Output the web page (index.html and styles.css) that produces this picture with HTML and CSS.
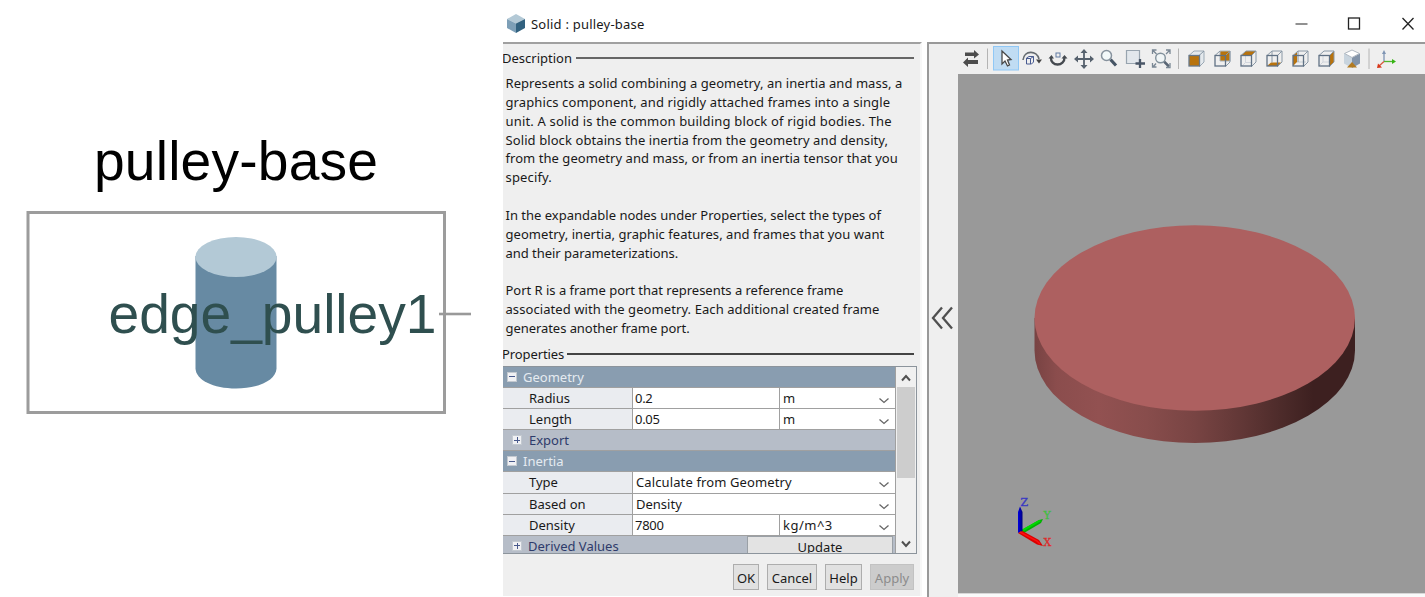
FILE: index.html
```
<!DOCTYPE html>
<html lang="en">
<head>
<meta charset="utf-8">
<title>Solid : pulley-base</title>
<link rel="stylesheet" href="styles.css">
</head>
<body>
<div class="page">
  <section class="diagram">
    <svg width="503" height="597" viewBox="0 0 503 597">
      <text x="94" y="180" font-size="55.200" textLength="284" fill="#000">pulley-base</text>
      <rect x="28" y="212.500" width="416.500" height="200" fill="#fff" stroke="#9c9c9c" stroke-width="3"/>
      <path d="M195.500 256V368.500C196 380 213 388.500 236 388.500S276 380 276.500 368.500V256Z" fill="#678aa3"/>
      <ellipse cx="236" cy="257" rx="40.500" ry="20" fill="#b3c9d6"/>
      <text x="108.500" y="332.500" font-size="55.200" textLength="328" fill="#2f4f4f">edge_pulley1</text>
      <path d="M439 314H471" stroke="#999" stroke-width="2.600"/>
    </svg>
  </section>
  <section class="dialog">
    <header class="titlebar">
      <svg class="cube" width="18" height="20" viewBox="0 0 18 20"><path d="M9 0L18 5L9 9.500L0 5Z" fill="#b3c9d6"/><path d="M0 5L9 9.500V19L0 14Z" fill="#7d9fb7"/><path d="M18 5L9 9.500V19L18 14Z" fill="#31617f"/></svg>
      <span class="title">Solid : pulley-base</span>
      <svg class="winbtns" width="130" height="42" viewBox="0 0 130 42" fill="none" stroke="#222" stroke-width="1.300"><path d="M0.500 24H12.500" stroke="#555"/><rect x="53.500" y="18" width="11" height="11"/><path d="M107.500 18L118.500 29.500M118.500 18L107.500 29.500"/></svg>
    </header>
    <div class="body">
      <div class="left">
        <div class="legend l1"><span class="d0">Description</span><i></i></div>
        <div class="desc">
          <span class="a1">Represents a solid combining a geometry, an inertia and mass, a</span>
          <span class="a2">graphics component, and rigidly attached frames into a single</span>
          <span class="a3">unit. A solid is the common building block of rigid bodies. The</span>
          <span class="a4">Solid block obtains the inertia from the geometry and density,</span>
          <span class="a5">from the geometry and mass, or from an inertia tensor that you</span>
          <span class="a6">specify.</span>
          <span class="gap"></span>
          <span class="a7">In the expandable nodes under Properties, select the types of</span>
          <span class="a8">geometry, inertia, graphic features, and frames that you want</span>
          <span class="a9">and their parameterizations.</span>
          <span class="gap"></span>
          <span class="a10">Port R is a frame port that represents a reference frame</span>
          <span class="a11">associated with the geometry. Each additional created frame</span>
          <span class="a12">generates another frame port.</span>
        </div>
        <div class="legend l2"><span>Properties</span><i></i></div>
        <div class="table">
          <div class="rows">
            <div class="row head"><b class="box minus"></b><span>Geometry</span></div>
            <div class="row"><div class="name">Radius</div><div class="val">0.2</div><div class="unit">m<svg class="chev" viewBox="0 0 10 6"><path d="M0.500 0.500L5 4.500L9.500 0.500"/></svg></div></div>
            <div class="row"><div class="name">Length</div><div class="val">0.05</div><div class="unit">m<svg class="chev" viewBox="0 0 10 6"><path d="M0.500 0.500L5 4.500L9.500 0.500"/></svg></div></div>
            <div class="row sub"><b class="box plus"></b><span>Export</span></div>
            <div class="row head"><b class="box minus"></b><span>Inertia</span></div>
            <div class="row"><div class="name">Type</div><div class="val wide calc">Calculate from Geometry<svg class="chev" viewBox="0 0 10 6"><path d="M0.500 0.500L5 4.500L9.500 0.500"/></svg></div></div>
            <div class="row"><div class="name">Based on</div><div class="val wide">Density<svg class="chev" viewBox="0 0 10 6"><path d="M0.500 0.500L5 4.500L9.500 0.500"/></svg></div></div>
            <div class="row"><div class="name">Density</div><div class="val">7800</div><div class="unit kg">kg/m^3<svg class="chev" viewBox="0 0 10 6"><path d="M0.500 0.500L5 4.500L9.500 0.500"/></svg></div></div>
            <div class="row sub"><b class="box plus"></b><span class="derived">Derived Values</span><div class="update">Update</div></div>
          </div>
          <div class="scroll">
            <svg width="20" height="186" viewBox="0 0 20 186"><rect x="1" y="20" width="18" height="91" fill="#cdcdcd"/><path d="M6 13.500L10 9L14 13.500M6 174.500L10 179L14 174.500" fill="none" stroke="#505050" stroke-width="2"/></svg>
          </div>
        </div>
        <div class="buttons"><div class="btn ok">OK</div><div class="btn cancel">Cancel</div><div class="btn help">Help</div><div class="btn apply">Apply</div></div>
      </div>
      <div class="right">
        <div class="toolbar">
          <svg width="496" height="30" viewBox="929 44 496 30" fill="none">
            <g fill="#4d4d4d"><path d="M965 52.500H974V50L979 54.500L974 58.500V56H965Z"/><path d="M978 60H968V57.500L963 62.500L968 67V64H978Z"/></g>
            <g stroke="#b4b4b4"><path d="M987.500 48.500V69M1178.500 48.500V69M1369 48.500V69"/></g>
            <rect x="993.500" y="46.500" width="25" height="23.500" fill="#c0dcf3" stroke="#90c8f6"/>
            <path d="M1002 51V64L1005 61L1007.500 66L1009.500 65L1007.500 60L1011 59.500Z" fill="#fff" stroke="#474747" stroke-width="1.300"/>
            <path d="M1023 60C1024 50 1037 50 1039 59" stroke="#656b70" stroke-width="1.600"/><path d="M1036 59.500H1042L1039 63.500Z" fill="#444"/>
            <path d="M1026.500 58L1029 56.500H1033.500V62L1031.500 64H1026.500ZM1026.500 58.500H1030.500V64M1030.500 58.500L1033.500 56.500" stroke="#485b91"/>
            <path d="M1051 57C1050 67 1065 67 1064.500 57" stroke="#454a50" stroke-width="2.300"/><path d="M1048.500 58.500L1051.500 55L1054 58.500ZM1061.500 58.500L1064.500 55L1067.500 58.500Z" fill="#454a50"/><rect x="1056" y="53" width="4" height="4" stroke="#637ca4"/>
            <path d="M1084 52V66M1077 59H1091" stroke="#56616d" stroke-width="1.800"/><path d="M1084 49L1087.500 53H1080.500ZM1084 69L1087.500 65H1080.500ZM1074 59L1078 55.500V62.500ZM1094 59L1090 55.500V62.500Z" fill="#56616d"/>
            <path d="M1110.500 59.500L1116 65.500" stroke="#465565" stroke-width="3.200"/><circle cx="1106.500" cy="55.500" r="5" fill="#f3f9fa" stroke="#87939e" stroke-width="1.500"/>
            <path d="M1126.500 50.500H1139.500V63.500H1126.500Z" fill="#e2e7ec" stroke="#98a4af" stroke-width="1.200"/><path d="M1140 59V68M1135.500 63.500H1145" stroke="#495667" stroke-width="2.300"/>
            <path d="M1164 61.500L1169 66.500" stroke="#596675" stroke-width="2.500"/><circle cx="1160.500" cy="58" r="4.800" fill="#f0f5f6" stroke="#81909b" stroke-width="1.400"/><path d="M1152.500 54V50H1156.500M1166 50H1170V54M1152.500 63V67H1156.500M1166 67.500H1170V63M1153 50.500L1156.500 54M1169.500 50.500L1166 54M1153 67L1156 63.500" stroke="#798794" stroke-width="1.300"/>
            <g transform="translate(1188 50)"><path d="M1 5.500L6 1H16V12L11.500 16.500V5.500Z" fill="#e4e9ed" stroke="#9ba9b5"/><path d="M11 5.500L16 1" stroke="#8998a6"/><rect x="1" y="5.500" width="10.500" height="10.500" fill="#b8730d" stroke="#67788a" stroke-width="1.300"/></g>
            <g transform="translate(1214 50)"><path d="M6 1H16V11H6Z" fill="#b8730d" stroke="#a8b3bd"/><path d="M1 5.500L6 1M11.500 5.500L16 1V12L11.500 16.500" stroke="#8998a6"/><rect x="1" y="5.500" width="10.500" height="10.500" stroke="#607184" stroke-width="1.300"/></g>
            <g transform="translate(1240 50)"><path d="M1 5.500L6 1H16L11.500 5.500Z" fill="#b8730d"/><path d="M5.500 6V12.500H11M5.500 12.500L2 16" stroke="#d1d5dc"/><path d="M1 5.500L6 1H16V12L11.500 16.500V5.500L16 1" stroke="#8998a6"/><rect x="1" y="5.500" width="10.500" height="10.500" stroke="#607184" stroke-width="1.300"/></g>
            <g transform="translate(1266 50)"><path d="M1 16L5 12.500H15L11.500 16Z" fill="#b8730d"/><path d="M1 5.500L6 1H16V12L11.500 16.500V5.500L16 1M6 1V12.500" stroke="#8998a6"/><rect x="1" y="5.500" width="10.500" height="10.500" stroke="#607184" stroke-width="1.300"/></g>
            <g transform="translate(1292 50)"><path d="M1 5.500L5 2V12L1 16Z" fill="#b8730d"/><path d="M5 12H14" stroke="#c5ced5"/><path d="M1 5.500L6 1H16V12L11.500 16.500V5.500L16 1M6 1V12" stroke="#8998a6"/><rect x="1" y="5.500" width="10.500" height="10.500" stroke="#607184" stroke-width="1.300"/></g>
            <g transform="translate(1318 50)"><path d="M11.500 5.500L16 1V12L11.500 16.500Z" fill="#b8730d"/><path d="M5 6V12H11M5 12L1 16" stroke="#d1d5dc"/><path d="M1 5.500L6 1H16V12L11.500 16.500V5.500L16 1" stroke="#8998a6"/><rect x="1" y="5.500" width="10.500" height="10.500" stroke="#607184" stroke-width="1.300"/></g>
            <path d="M1344 53.500L1352 57.500V68L1344 63.500Z" fill="#c8d4de"/><path d="M1360 53.500L1352 57.500V68L1360 63.500Z" fill="#8293a8"/><path d="M1352 50L1359.500 53.500L1352 57.500L1344.500 53.500Z" fill="#fff" stroke="#aeb6bf"/><path d="M1352 62L1357 67.500H1347Z" fill="#b27a20"/>
            <path d="M1384 61.500V53" stroke="#7e94b3" stroke-width="1.300"/><path d="M1384 50L1386 54H1382Z" fill="#7e94b3"/><path d="M1384 61.500H1393" stroke="#4eb72d" stroke-width="1.300"/><path d="M1396 61.500L1392 59V64Z" fill="#37b414"/><path d="M1384 61.500L1379 66" stroke="#d8593f" stroke-width="1.300"/><path d="M1377 68L1378 63.500L1382 67.500Z" fill="#d83618"/>
          </svg>
        </div>
        <div class="work">
          <div class="collapse"><svg width="24" height="26" viewBox="0 0 24 26"><path d="M12 2.500L3 13L12 23.500M22 2.500L13 13L22 23.500" fill="none" stroke="#505050" stroke-width="2.300"/></svg></div>
          <div class="view">
            <svg width="467" height="519" viewBox="958 74 467 519">
              <defs><linearGradient id="side"><stop offset="0" stop-color="#784343"/><stop offset=".07" stop-color="#8b4d4d"/><stop offset=".2" stop-color="#925151"/><stop offset=".35" stop-color="#884d4c"/><stop offset=".5" stop-color="#784443"/><stop offset=".65" stop-color="#613736"/><stop offset=".78" stop-color="#4b2a29"/><stop offset=".87" stop-color="#3d2020"/><stop offset="1" stop-color="#3d2020"/></linearGradient>
              <linearGradient id="blue"><stop offset="0" stop-color="#0000e0"/><stop offset="1" stop-color="#000080"/></linearGradient></defs>
              <path d="M1034.500 318V350.500A160.250 92.500 0 0 0 1355 350.500V318Z" fill="url(#side)"/>
              <ellipse cx="1194.750" cy="318" rx="160.250" ry="92.700" fill="#ad6060"/>
              <path d="M1020 531L1039 520L1043 519L1041 523L1024 533Z" fill="#00b000"/><path d="M1021 530L1039 520L1041 521L1024 531Z" fill="#00d900"/>
              <path d="M1018 533V512L1020 506.500L1022.500 512V531Z" fill="url(#blue)"/>
              <path d="M1018 533L1022.500 531L1039 540L1043 546L1037 544.500Z" fill="#dc0000"/><path d="M1020 532L1037 541L1040 544" stroke="#ff1010" stroke-width="1.500" fill="none"/>
              <g font-family="DejaVu Serif" font-size="11"><text x="1020.500" y="506" fill="#3939c3" stroke="#3939c3" stroke-width=".3">Z</text><text x="1043.500" y="519" fill="#42bd42" stroke="#42bd42" stroke-width=".3">Y</text><text x="1043.500" y="546" fill="#df2929" stroke="#df2929" stroke-width=".3">X</text></g>
            </svg>
          </div>
        </div>
      </div>
    </div>
  </section>
</div>
</body>
</html>
```
FILE: styles.css
```
*{box-sizing:border-box}
body{margin:0;background:#fff;font-family:"Noto Sans","Open Sans",sans-serif;font-size:13px;color:#191919;overflow:hidden}
svg{display:block}
.page{display:flex;width:1425px;height:597px}
.diagram{width:503px;font-family:"Liberation Sans",Arial,sans-serif}
.dialog{width:922px;display:flex;flex-direction:column}
.titlebar{height:42px;display:flex;align-items:center;padding:5px 0 0 4px}
.cube{margin-top:1px}
.title{margin:1px 0 0 6px;letter-spacing:.22px}
.winbtns{margin:-5px 0 0 auto}
.body{display:flex;height:555px}
.left{width:419px;height:554px;background:#efefef;border-top:2px solid #a0a0a0;border-right:2px solid #f8f8f8;white-space:nowrap;overflow:hidden}
.legend{display:flex;align-items:center;height:18px;line-height:18px;margin-left:-1px}
.legend i{height:2px;background:#666;flex:1;margin:0 6px 0 4px}
.l1{margin-top:4px;height:19px}
.l2{margin-top:7px;letter-spacing:-.1px}
.l2 i{background:#444;margin-left:3px}
.desc{display:flex;flex-direction:column;align-items:flex-start;margin:7px 0 0 2.5px;line-height:19.4px}
.desc span{height:18.850px;flex:none}
.a1,.a5,.a8{letter-spacing:.05px}
.a2{letter-spacing:.107px}
.a3{letter-spacing:.17px}
.a4{letter-spacing:.09px}
.a6{letter-spacing:.15px}
.a9{letter-spacing:-.04px}
.a10{letter-spacing:-.02px}
.a11{letter-spacing:.08px}
.a12{letter-spacing:-.06px}
.table{width:414px;height:188px;margin-top:3px;border:1px solid #8c949c;border-left:0;display:flex;background:#efefef;overflow:hidden}
.rows{width:393px;border-right:1px solid #a0a0a0;overflow:hidden}
.row{height:21.140px;border-bottom:1px solid #a0a0a0;display:flex;line-height:21px;background:#fff;color:#191919}
.head{background:#899db0;color:#e5ebf0;align-items:center;padding-left:4px}
.sub{background:#b6bdc8;color:#2e3b6b;align-items:center;padding-left:9px}
.head span{margin:1px 0 0 6px}
.sub span{margin:1px 0 0 7px}
.sub .derived{margin-left:6px}
.name{width:130px;background:#eaecf0;padding-left:26px;border-right:1px solid #a0a0a0}
.val{width:147px;border-right:1px solid #a0a0a0;padding-left:2px;letter-spacing:-.3px}
.wide{width:262px;border-right:0;padding-left:3px;display:flex;justify-content:space-between;letter-spacing:0}
.calc{letter-spacing:.12px}
.unit{flex:1;padding-left:3px;display:flex;justify-content:space-between}
.kg{letter-spacing:.5px}
.chev{width:10px;height:6px;margin:10px 6px 0 0;fill:none;stroke:#666;stroke-width:1.300}
.box{width:10px;height:10px;background:linear-gradient(#48598c,#48598c) center/6px 1px no-repeat,#f0f1f4;border:1px solid #c3c9d0}
.plus{background:linear-gradient(#48598c,#48598c) center/6px 1px no-repeat,linear-gradient(#48598c,#48598c) center/1px 6px no-repeat,#f0f1f4}
.update{width:146px;height:21px;margin:1px 2px 0 auto;border:1px solid #9aa0a6;border-bottom:0;background:#e3e3e3;color:#191919;text-align:center;line-height:21px}
.scroll{width:20px;background:#f0f0f0}
.buttons{display:flex;justify-content:flex-end;padding:11px 3px 0 0;gap:8px;margin:-1px 3px 0 0}
.btn{height:26px;border:1px solid #adadad;background:#e1e1e1;display:flex;justify-content:center;line-height:26px}
.ok{width:26px}.cancel{width:50px}.help{width:37px}.apply{width:44px;background:#ccc;border-color:#c2c2c2;color:#8b8b8b}
.right{margin-left:5px;width:498px;border-left:2px solid #999;border-top:2px solid #999;background:#efefef}
.toolbar{height:30px}
.work{display:flex;height:523px}
.collapse{width:29px;padding:231px 0 0 1px}
.view{width:467px;height:520px;background:#999;border-bottom:1px solid #d8d8d8;box-shadow:0 3px #fafafa}
```
